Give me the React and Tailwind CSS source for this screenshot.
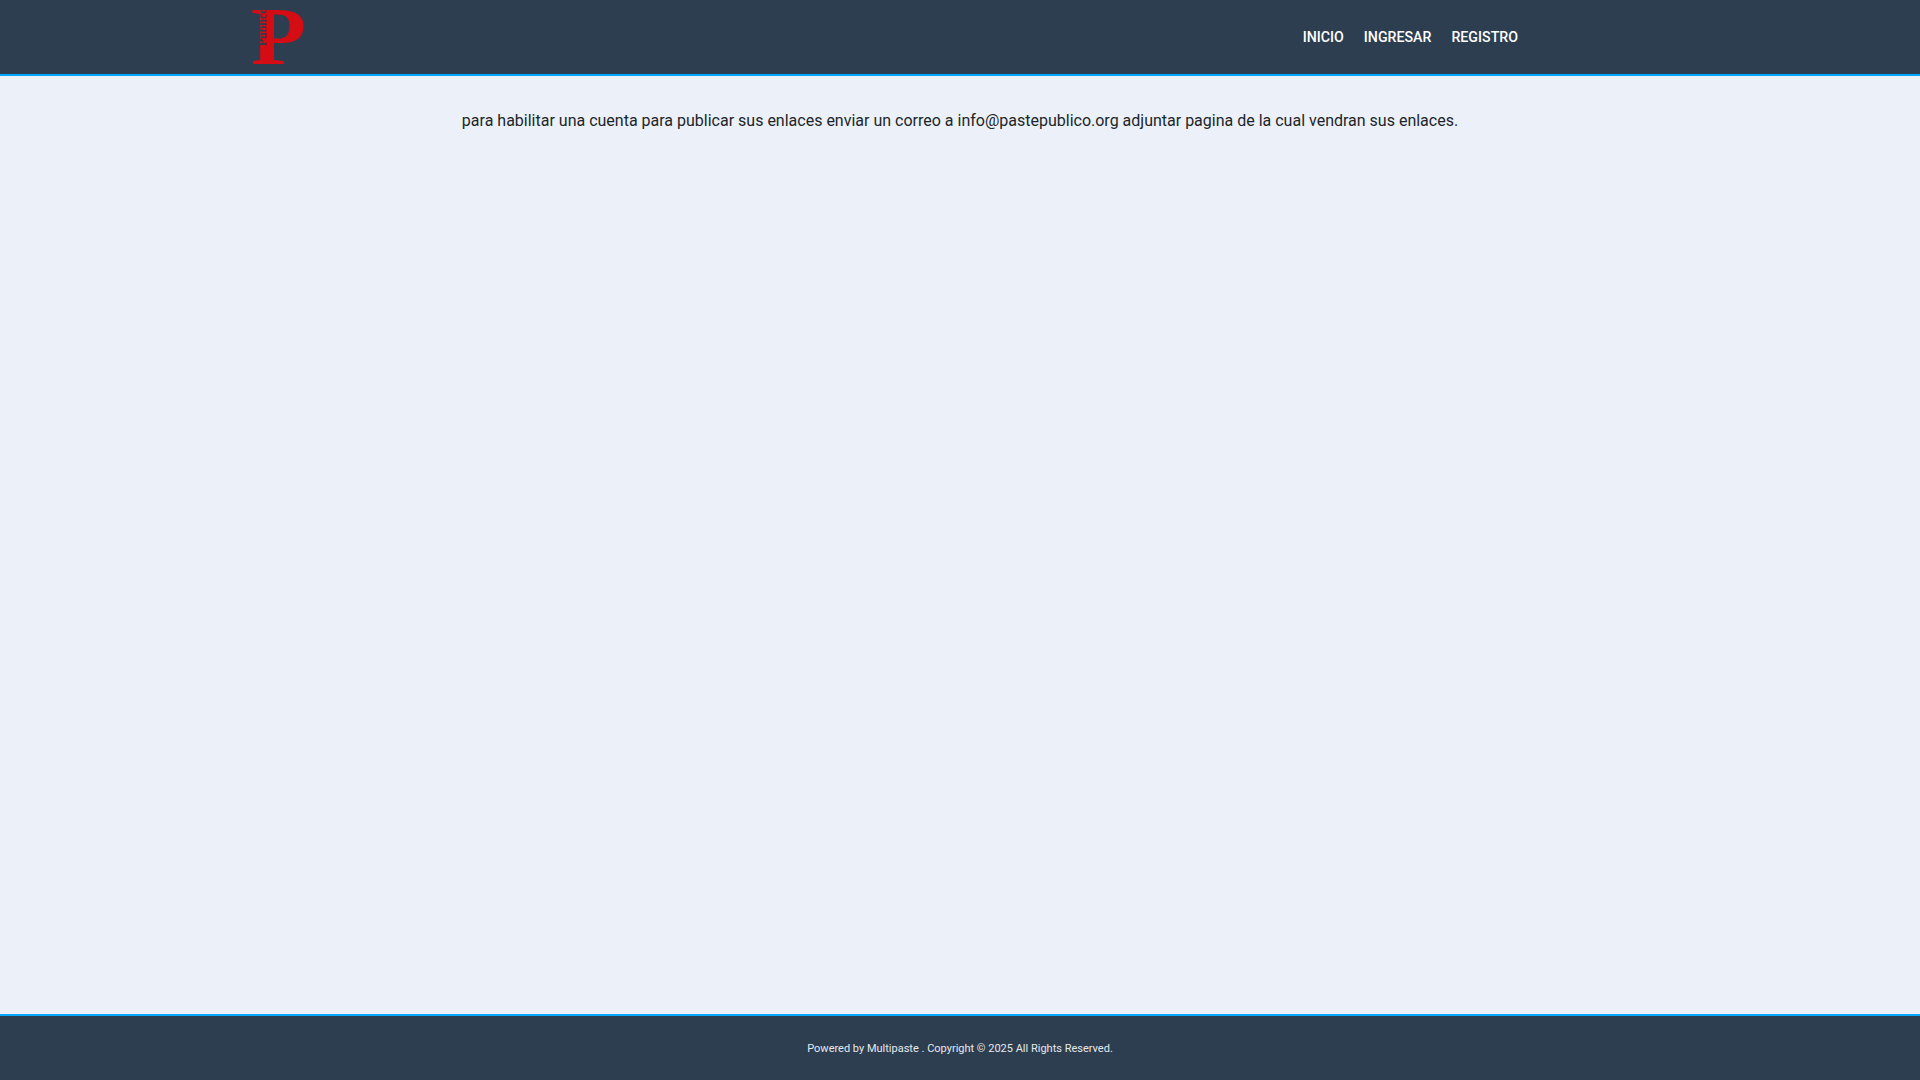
export default function App() {
  return (
    <div className="flex h-[1080px] flex-col bg-[#ecf1f9] font-['Roboto',sans-serif]">
      {/* Header */}
      <header className="h-[76px] border-b-[2px] border-[#00a8ff] bg-[#2c3e50]">
        <div className="flex h-[74px] items-center justify-between pl-[251px] pr-[402px]">
          <div className="relative h-[74px] w-[52px]">
            <span className="block h-[74px] origin-left scale-x-110 text-[82px] leading-[74px] font-bold text-[#d40c14] font-['Liberation_Serif',serif]">P</span>
            <span className="absolute top-[21px] left-[-11px] w-[44px] -rotate-90 text-center text-[12px] leading-[12px] font-bold text-[#2c3e50] font-['Liberation_Serif',serif]">Público</span>
          </div>
          <nav className="flex gap-5 pt-[2px] text-[14.2px] font-medium text-white">
            <a>INICIO</a>
            <a>INGRESAR</a>
            <a>REGISTRO</a>
          </nav>
        </div>
      </header>

      {/* Mensaje */}
      <main className="flex-1 pt-[33px] text-center text-base leading-6 text-[#212529]">
        para habilitar una cuenta para publicar sus enlaces enviar un correo a info@pastepublico.org adjuntar pagina de la cual vendran sus enlaces.
      </main>

      {/* Footer */}
      <footer className="flex h-[66px] items-center justify-center border-t-[2px] border-[#00a8ff] bg-[#2c3e50] pt-[2px] text-[11px] text-[#e6e9ee]">
        Powered by Multipaste . Copyright © 2025 All Rights Reserved.
      </footer>
    </div>
  );
}
